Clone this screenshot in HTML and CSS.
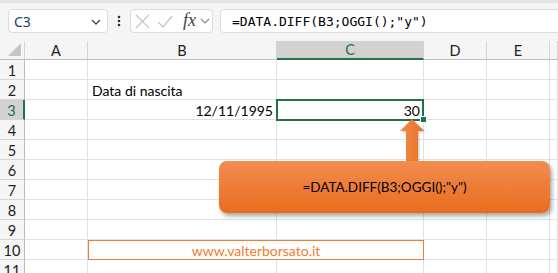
FILE: index.html
```html
<!DOCTYPE html>
<html lang="it">
<head>
    <meta charset="UTF-8">
    <title>DATA.DIFF</title>
    <link rel="stylesheet" href="styles.css">
</head>
<body>
    <div class="app">
        <div class="topstrip"></div>
        <div class="fbar">
            <div class="namebox">
                <span>C3</span>
                <svg class="chev" width="10" height="6" viewBox="0 0 10 6"><path d="M1 1l4 4 4-4" fill="none" stroke="#444" stroke-width="1.3"/></svg>
            </div>
            <div class="dots">
                <svg width="4" height="12" viewBox="0 0 4 12"><circle cx="2" cy="2" r="1.3" fill="#333"/><circle cx="2" cy="6" r="1.3" fill="#333"/><circle cx="2" cy="10" r="1.3" fill="#333"/></svg>
            </div>
            <div class="fxbox">
                <svg width="15" height="15" viewBox="0 0 15 15"><path d="M1 1l13 13M14 1L1 14" stroke="#c4c4c4" stroke-width="1.2" fill="none"/></svg>
                <svg width="16" height="13" viewBox="0 0 16 13"><path d="M1 7l5 5L15 1" stroke="#c4c4c4" stroke-width="1.2" fill="none"/></svg>
                <span class="fx">fx</span>
                <svg width="10" height="6" viewBox="0 0 10 6"><path d="M1 1l4 4 4-4" fill="none" stroke="#888" stroke-width="1.1"/></svg>
            </div>
            <div class="formula">=DATA.DIFF(B3;OGGI();"y")</div>
        </div>
        <div class="sheet">
            <div class="hd corner"></div>
            <div class="hd">A</div>
            <div class="hd">B</div>
            <div class="hd sel-col">C</div>
            <div class="hd">D</div>
            <div class="hd">E</div>
            <div class="hd"></div>

            <div class="rh">1</div><div class="c"></div><div class="c"></div><div class="c"></div><div class="c"></div><div class="c"></div><div class="c"></div>
            <div class="rh">2</div><div class="c"></div><div class="c">Data di nascita</div><div class="c"></div><div class="c"></div><div class="c"></div><div class="c"></div>
            <div class="rh sel-row">3</div><div class="c"></div><div class="c num">12/11/1995</div><div class="c num active">30</div><div class="c"></div><div class="c"></div><div class="c"></div>
            <div class="rh">4</div><div class="c"></div><div class="c"></div><div class="c"></div><div class="c"></div><div class="c"></div><div class="c"></div>
            <div class="rh">5</div><div class="c"></div><div class="c"></div><div class="c"></div><div class="c"></div><div class="c"></div><div class="c"></div>
            <div class="rh">6</div><div class="c"></div><div class="c"></div><div class="c"></div><div class="c"></div><div class="c"></div><div class="c"></div>
            <div class="rh">7</div><div class="c"></div><div class="c"></div><div class="c"></div><div class="c"></div><div class="c"></div><div class="c"></div>
            <div class="rh">8</div><div class="c"></div><div class="c"></div><div class="c"></div><div class="c"></div><div class="c"></div><div class="c"></div>
            <div class="rh">9</div><div class="c"></div><div class="c"></div><div class="c"></div><div class="c"></div><div class="c"></div><div class="c"></div>
            <div class="rh">10</div><div class="c"></div><div class="c link">www.valterborsato.it</div><div class="c"></div><div class="c"></div><div class="c"></div>
            <div class="rh">11</div><div class="c"></div><div class="c"></div><div class="c"></div><div class="c"></div><div class="c"></div><div class="c"></div>
        </div>

        <svg class="arrow" width="24" height="42" viewBox="0 0 24 42">
            <defs>
                <linearGradient id="ag" x1="0" y1="0" x2="1" y2="0">
                    <stop offset="0" stop-color="#f08c4e"/>
                    <stop offset="1" stop-color="#e8701f"/>
                </linearGradient>
            </defs>
            <polygon points="12,0 24,12 18,12 18,42 6,42 6,12 0,12" fill="url(#ag)"/>
        </svg>
        <div class="callout">=DATA.DIFF(B3;OGGI();"y")</div>
    </div>
</body>
</html>
```

FILE: styles.css
```css
body{
    margin: 0;
    padding: 0;
    background: #fff;
    overflow: hidden;
}
.app{
    position: relative;
    width: 558px;
    height: 273px;
    overflow: hidden;
    font-family: Lato, "Liberation Sans", sans-serif;
}
.topstrip{
    height: 3px;
    background: #e4e4e4;
}
.fbar{
    height: 38px;
    box-sizing: border-box;
    padding: 6px 0 0 8px;
    display: flex;
    align-items: flex-start;
    background: #f5f5f5;
}
.namebox,
.fxbox,
.formula{
    height: 24px;
    box-sizing: border-box;
    background: #fff;
    border: 1px solid #dcdcdc;
    border-radius: 4px;
    display: flex;
    align-items: center;
}
.namebox{
    width: 100px;
    padding: 0 5px 0 5px;
    justify-content: space-between;
    font-family: "Noto Sans", sans-serif;
    font-size: 14px;
    color: #1f3a5f;
}
.namebox .chev{
    margin-right: 1px;
    margin-top: 2px;
}
.dots{
    width: 22px;
    height: 24px;
    display: flex;
    align-items: center;
    justify-content: center;
}
.fxbox{
    width: 83px;
    padding: 0 0 0 4px;
    gap: 7px;
}
.fxbox .fx{
    font-family: "Liberation Serif", serif;
    font-style: italic;
    font-size: 18px;
    color: #444;
    margin-left: 3px;
    margin-right: -3px;
    margin-top: -2px;
}
.formula{
    flex: 1;
    margin-left: 7px;
    margin-right: -10px;
    padding-left: 11px;
    font-family: "DejaVu Sans Mono", "Liberation Mono", monospace;
    font-size: 13px;
    color: #000;
}
.sheet{
    display: grid;
    grid-template-columns: 25px 63px 189px 147px 63px 63px 1fr;
    grid-template-rows: 19px repeat(11, 20px);
    font-size: 14px;
}
.hd,
.rh{
    background: #f5f5f5;
    color: #222;
    display: flex;
    align-items: center;
    justify-content: center;
    box-sizing: border-box;
    font-size: 14.5px;
}
.hd{
    border-right: 1px solid #d4d4d4;
    border-bottom: 1px solid #bcbcbc;
}
.rh{
    border-right: 1px solid #bcbcbc;
    border-bottom: 1px solid #d4d4d4;
    padding-top: 1px;
}
.corner{
    position: relative;
}
.corner::after{
    content: "";
    position: absolute;
    right: 3px;
    bottom: 3px;
    border-style: solid;
    border-width: 0 0 13px 13px;
    border-color: transparent transparent #c6c6c6 transparent;
}
.sel-col{
    background: #d2d2d2;
    color: #217346;
    border-bottom: 2px solid #217346;
}
.sel-row{
    background: #d2d2d2;
    color: #217346;
    border-right: 2px solid #217346;
}
.c{
    box-sizing: border-box;
    border-right: 1px solid #e1e1e1;
    border-bottom: 1px solid #e1e1e1;
    display: flex;
    align-items: center;
    padding: 1px 3px 0 4px;
    color: #000;
    white-space: nowrap;
}
.num{
    justify-content: flex-end;
}
.active{
    position: relative;
}
.active::after{
    content: "";
    position: absolute;
    top: -1px;
    left: -1px;
    right: -1px;
    bottom: -2px;
    border: 2px solid #217346;
}
.active::before{
    content: "";
    position: absolute;
    right: -4px;
    bottom: -4px;
    width: 5px;
    height: 5px;
    background: #217346;
    border: 1px solid #fff;
    z-index: 2;
}
.link{
    grid-column: span 2;
    justify-content: center;
    color: #ed7d31;
    outline: 1px solid #ed7d31;
    outline-offset: -1px;
}
.arrow{
    position: absolute;
    left: 400px;
    top: 119px;
    filter: drop-shadow(1px 1px 1px rgba(0,0,0,0.25));
}
.callout{
    position: absolute;
    left: 219px;
    top: 161px;
    width: 331px;
    height: 52px;
    box-sizing: border-box;
    border-radius: 8px;
    background: linear-gradient(#f28d51, #e96c1d);
    box-shadow: 2px 3px 4px rgba(0,0,0,0.35);
    display: flex;
    align-items: center;
    justify-content: center;
    font-size: 13.5px;
    color: #000;
}
```
